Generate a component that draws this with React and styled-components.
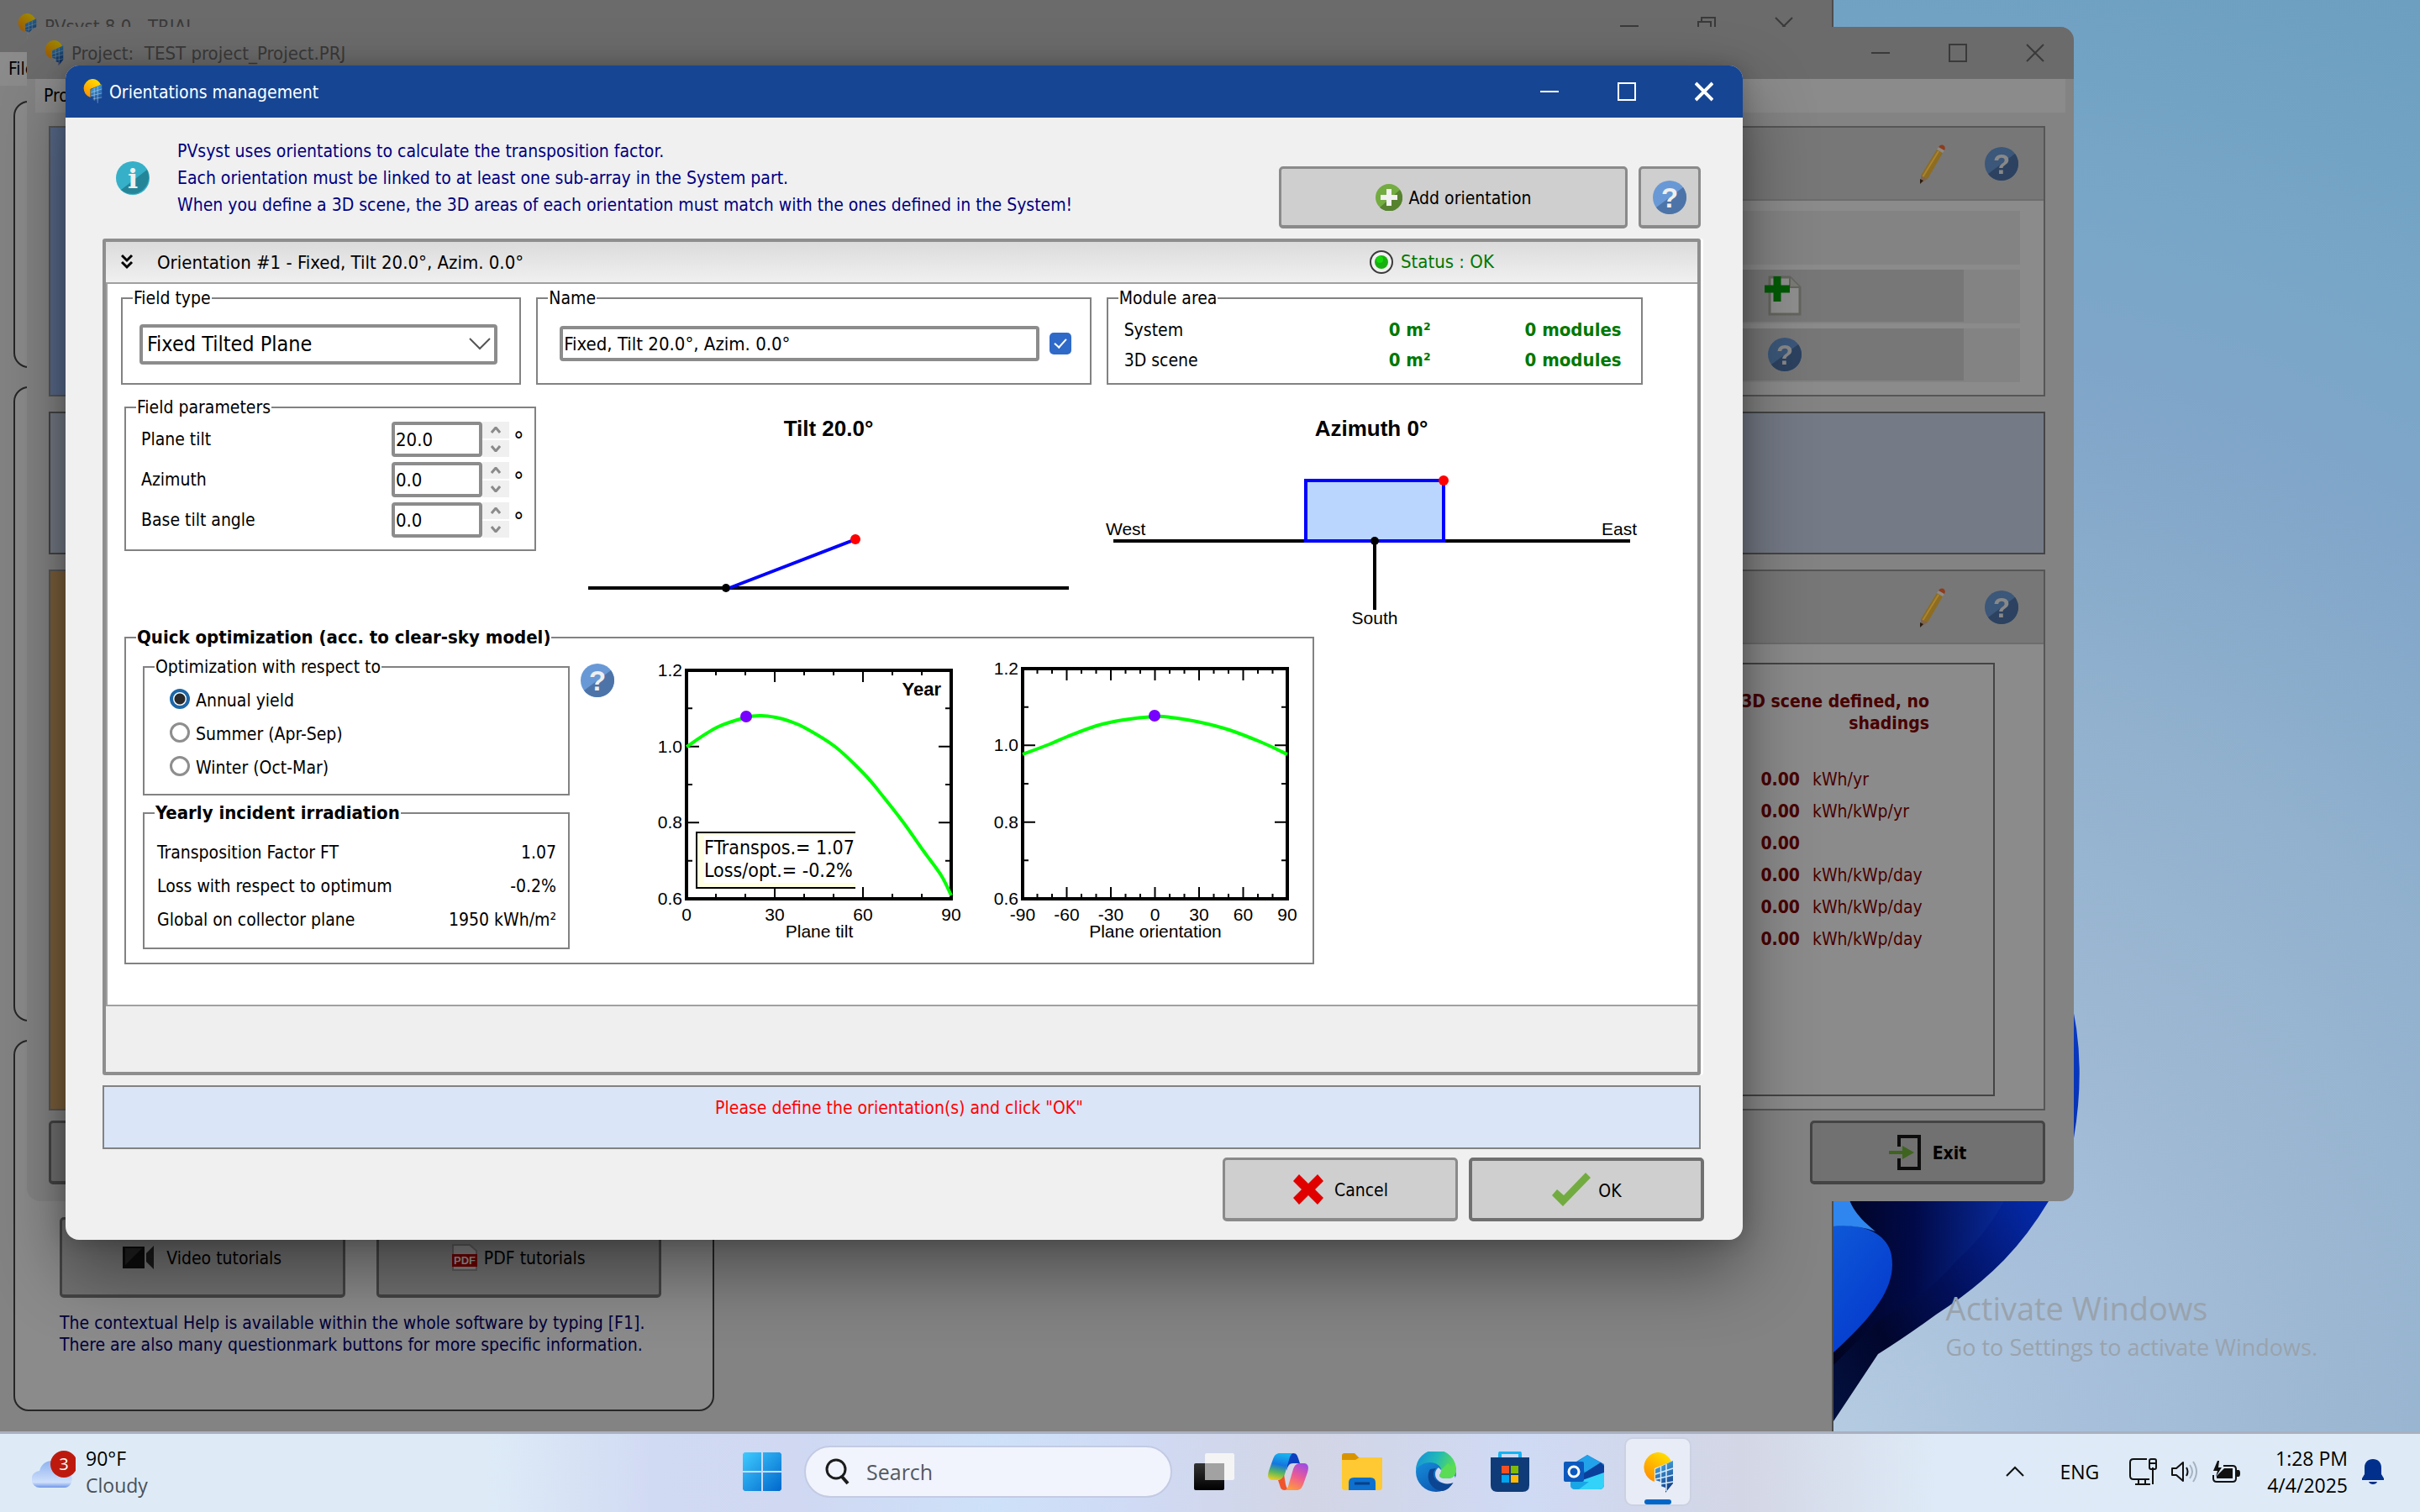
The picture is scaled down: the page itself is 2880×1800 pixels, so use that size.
import React, { useState } from "react";
import styled, { createGlobalStyle, css } from "styled-components";

const TAHOMA = '"DejaVu Sans Condensed", "DejaVu Sans", "Noto Sans", sans-serif';
const SEGOE = '"Open Sans", "Noto Sans", sans-serif';
const ARIAL = '"Liberation Sans", Arial, sans-serif';

const GlobalStyle = createGlobalStyle`
  *, *::before, *::after { box-sizing: border-box; }
  html, body, #root { height: 100%; }
  body { margin: 0; overflow: hidden; font-family: ${TAHOMA}; font-size: 21px; line-height: 26px; color: #000; }
  button, input, select { font: inherit; color: inherit; margin: 0; }
  svg { display: block; flex: none; }
  p, h1, h2 { margin: 0; font-size: inherit; font-weight: inherit; }
`;

/* ---------- desktop ---------- */

const Desktop = styled.div`
  height: 100vh;
  display: flex;
  flex-direction: column;
  background: #9bb8d4;
`;

const Workspace = styled.main`
  position: relative;
  flex: 1;
  overflow: hidden;
  background: radial-gradient(circle at 76% 100%, #b4cbe1 0, #a7bfda 300px, #9cb7d2 600px, #91b1ce 900px, #81a6c9 1250px, #78a6c7 1500px, #6c9fc0 1830px);
`;

const Wallpaper = styled.svg`
  position: absolute;
  right: 398px;
  bottom: 0;
`;

const Watermark = styled.div`
  position: absolute;
  right: 122px;
  bottom: 80px;
  font-family: ${SEGOE};
  font-size: 27px;
  line-height: 40px;
  color: #99a3ad;
`;

const WatermarkTitle = styled.div`
  font-size: 38px;
  line-height: 54px;
`;

/* ---------- window frames ---------- */

const WindowBox = styled.section`
  position: absolute;
  display: flex;
  flex-direction: column;
  overflow: hidden;
`;

const MainWindow = styled(WindowBox)`
  inset: 0 698px 0 0;
  background: #838383;
  border-right: 2px solid #4c4c4c;
`;

const ProjectWindow = styled(WindowBox)`
  top: 32px;
  left: 32px;
  right: 412px;
  border-radius: 16px;
  background: #838383;
`;

const Dialog = styled(WindowBox)`
  top: 78px;
  left: 78px;
  right: 806px;
  border-radius: 16px;
  background: #f0f0f0;
  box-shadow: 0 36px 84px rgba(0, 0, 0, 0.42), 0 0 24px rgba(0, 0, 0, 0.2);
`;

const TitleBar = styled.header`
  display: flex;
  align-items: center;
  height: 62px;
  padding: 0 ${(p) => (p.$maximized ? 46 : 35)}px 0 20px;
  gap: ${(p) => (p.$active ? 8 : 9)}px;
  background: ${(p) => (p.$active ? "#164593" : "#6b6b6b")};
  color: ${(p) => (p.$active ? "#fff" : "#3a3a3a")};
  font-size: ${(p) => (p.$active ? 21 : 22)}px;
`;

const TitleText = styled.h1`
  flex: 1;
  padding-top: 2px;
  white-space: pre;
`;

const FrameButtons = styled.div`
  display: flex;
  gap: 70px;
`;

const FrameButton = styled.button`
  width: 22px;
  height: 24px;
  padding: 0;
  border: 0;
  background: none;
`;

const MenuBar = styled.nav`
  height: 40px;
  margin: 0 10px 0 ${(p) => (p.$flush ? 0 : 10)}px;
  padding: 7px 10px;
  background: #8b8b8b;
`;

const MenuLink = styled.a`
  color: #000;
  text-decoration: none;
`;

/* ---------- main window ---------- */

const CardColumn = styled.div`
  flex: 1;
  display: grid;
  grid-template-rows: 318fr 755fr 442fr;
  gap: 22px;
  width: 852px;
  padding: 18px 2px 24px 16px;
`;

const Card = styled.div`
  display: flex;
  flex-direction: column;
  justify-content: flex-end;
  gap: 17px;
  padding: 0 55px 64px 53px;
  border: 2px solid #262626;
  border-radius: 18px;
  background: #8b8b8b;
`;

const TutorialRow = styled.div`
  display: grid;
  grid-template-columns: 1fr 1fr;
  gap: 37px;
  margin-right: 6px;
`;

const HelpText = styled.p`
  color: #00003c;
  white-space: nowrap;
`;

/* ---------- push buttons ---------- */

const PushButton = styled.button`
  display: flex;
  align-items: center;
  justify-content: center;
  gap: ${(p) => p.$gap || 8}px;
  width: ${(p) => (p.$width ? p.$width + "px" : "auto")};
  height: ${(p) => p.$height || 76}px;
  padding: 0;
  border: ${(p) => (p.$default ? 4 : 3)}px solid ${(p) => (p.$default ? "#707070" : "#8a8a8a")};
  border-bottom-width: 4px;
  border-radius: 5px;
  background: #cfcfcf;
  ${(p) =>
    p.$dim &&
    css`
      background: #717171;
      border-color: #444;
    `}
`;

const Caption = styled.span`
  padding-top: 3px;
`;

/* ---------- project window ---------- */

const ProjectBody = styled.div`
  display: flex;
  flex-direction: column;
  padding: 16px 34px 20px 26px;
`;

const Section = styled.div`
  height: ${(p) => p.$height}px;
  margin-bottom: ${(p) => p.$below}px;
  border: 2px solid ${(p) => p.$line || "#565656"};
  background: linear-gradient(90deg, ${(p) => p.$tint} 400px, ${(p) => p.$fill || "#8b8b8b"} 400px);
`;

const SectionHead = styled.div`
  display: flex;
  align-items: center;
  justify-content: flex-end;
  gap: 46px;
  height: 87px;
  margin-left: 400px;
  padding-right: 30px;
  background: #777;
  border-bottom: 2px solid #6d6d6d;
`;

const Lines = styled.div`
  display: flex;
  flex-direction: column;
  gap: 6px;
  padding: 12px 28px 0 400px;
`;

const Line = styled.div`
  height: 64px;
  padding-right: 67px;
  background: #838383;
`;

const LineField = styled.div`
  display: flex;
  align-items: center;
  justify-content: flex-end;
  height: 62px;
  padding-right: 193px;
  background: #777;
`;

const SummaryBox = styled.div`
  height: 516px;
  margin: 22px 58px 0 400px;
  border: 2px solid #444;
  padding-right: 76px;
  color: #480000;
`;

const SummaryTitle = styled.p`
  padding-top: 31px;
  text-align: right;
  font-weight: bold;
`;

const SummaryTable = styled.table`
  margin: 35px 0 0 auto;
  border-collapse: collapse;
  td {
    height: 38px;
    padding: 0;
    width: 139px;
  }
  th {
    padding: 0 15px 0 0;
    text-align: right;
  }
`;

const ExitRow = styled.div`
  display: flex;
  justify-content: space-between;
  font-weight: bold;
`;

/* ---------- dialog ---------- */

const DialogBody = styled.div`
  padding: 24px 50px 22px 44px;
`;

const InfoRow = styled.div`
  display: flex;
  height: 108px;
  margin-bottom: 12px;
  padding-left: 16px;
`;

const InfoText = styled.p`
  flex: 1;
  height: 96px;
  padding-left: 33px;
  line-height: 32px;
  color: #000080;
`;

const InfoIconBox = styled.div`
  padding-top: 28px;
`;

const InfoActions = styled.div`
  display: flex;
  align-self: flex-end;
  gap: 13px;
`;

const Panel = styled.section`
  border: 4px solid #8e8e8e;
  border-radius: 3px;
  box-shadow: 3px 0 0 #fff;
`;

const PanelHead = styled.div`
  display: flex;
  align-items: center;
  height: 50px;
  padding: 0 0 0 18px;
  border-bottom: 2px solid #a0a0a0;
  background: linear-gradient(#dbdbdb, #f0f0f0);
  font-size: 22px;
`;

const PanelTitle = styled.h2`
  flex: 1;
  padding: 2px 0 0 28px;
`;

const Status = styled.div`
  display: flex;
  align-items: center;
  gap: 9px;
  width: 390px;
  color: #007800;
`;

const PanelBody = styled.div`
  padding: 4px 0 48px;
  border-left: 2px solid #a0a0a0;
  border-bottom: 2px solid #a0a0a0;
  background: #fff;
`;

const PanelFoot = styled.div`
  height: 78px;
  background: #efefef;
`;

const Group = styled.fieldset`
  min-width: 0;
  margin: 0;
  padding: 0;
  border: 2px solid #828282;
`;

const GroupTitle = styled.legend`
  margin-left: 12px;
  padding: 0 1px;
  font-size: ${(p) => (p.$bold ? 22 : 21)}px;
  font-weight: ${(p) => (p.$bold ? "bold" : "normal")};
`;

const TopGroups = styled.div`
  display: grid;
  grid-template-columns: 476fr 660fr 638fr;
  gap: 18px;
  padding: 0 65px 14px 16px;
`;

const SelectBox = styled.div`
  position: relative;
  margin: 18px 26px 22px 20px;
`;

const Select = styled.select`
  width: 100%;
  height: 48px;
  padding: 0 5px;
  border: 4px solid #8c8c8c;
  border-radius: 4px;
  background: #fff;
  appearance: none;
  font-size: 25px;
`;

const SelectArrow = styled.svg`
  position: absolute;
  right: 8px;
  top: 16px;
  pointer-events: none;
`;

const NameRow = styled.div`
  display: flex;
  align-items: center;
  gap: 12px;
  margin: 20px 22px 26px 26px;
`;

const TextInput = styled.input`
  flex: ${(p) => (p.$width ? "none" : 1)};
  width: ${(p) => (p.$width ? p.$width + "px" : "auto")};
  min-width: 0;
  height: 42px;
  padding: 0 1px;
  border: 4px solid #8c8c8c;
  border-radius: 4px;
  background: #fff;
  font-size: 22px;
`;

const Check = styled.input`
  appearance: none;
  width: 26px;
  height: 26px;
  border: 2px solid #777;
  border-radius: 5px;
  background: #fff;
  &:checked {
    border: 0;
    background: #2f6ac9;
  }
  &:checked::after {
    content: "";
    display: block;
    width: 8px;
    height: 14px;
    margin: 4px auto 0;
    border: solid #fff;
    border-width: 0 2px 2px 0;
    transform: rotate(42deg);
  }
`;

const AreaTable = styled.table`
  width: 592px;
  margin: 6px 22px 8px 19px;
  border-collapse: collapse;
  th,
  td {
    height: 36px;
    padding: 2px 0 0;
  }
  th {
    text-align: left;
    font-weight: normal;
  }
  td {
    text-align: right;
    font-size: 22px;
    font-weight: bold;
    color: #007800;
  }
  td + td {
    width: 227px;
  }
`;

const MiddleRow = styled.div`
  display: flex;
  align-items: flex-start;
  padding-left: 20px;
`;

const ParamGroup = styled(Group)`
  width: 490px;
`;

const ParamRows = styled.div`
  padding: 1px 0 11px 18px;
`;

const ParamRow = styled.div`
  display: flex;
  align-items: center;
  height: 48px;
`;

const ParamLabel = styled.label`
  flex: 1;
`;

const Spin = styled.div`
  display: grid;
  gap: 2px;
  width: 32px;
`;

const SpinButton = styled.button`
  display: grid;
  place-items: center;
  height: 20px;
  padding: 0;
  border: 0;
  background: #f0f0f0;
`;

const Degree = styled.span`
  width: 30px;
  padding: 4px 0 0 5px;
  font-size: 28px;
`;

const Sketches = styled.div`
  display: flex;
  gap: 10px;
  margin-bottom: -6px;
  padding-left: 22px;
`;

const QuickGroup = styled(Group)`
  width: 1416px;
  margin-left: 20px;
`;

const QuickBody = styled.div`
  display: flex;
  align-items: flex-start;
  padding: 9px 0 15px 20px;
`;

const QuickColumn = styled.div`
  display: grid;
  gap: 8px;
  width: 508px;
  margin-right: 13px;
`;

const HelpLink = styled.button`
  margin: 9px 29px 0 0;
  padding: 0;
  border: 0;
  background: none;
`;

const RadioRows = styled.div`
  padding: 5px 0 13px 30px;
`;

const RadioRow = styled.label`
  display: flex;
  align-items: center;
  gap: 7px;
  height: 40px;
`;

const Radio = styled.input`
  appearance: none;
  width: 24px;
  height: 24px;
  border: 3px solid #8e8e8e;
  border-radius: 50%;
  background: #fff;
  &:checked {
    border: 4px solid #1d67a8;
    background: radial-gradient(circle, #2a2a2a 6px, #fff 7px);
  }
`;

const YieldTable = styled.table`
  width: 475px;
  margin: 13px 14px 14px 15px;
  border-collapse: collapse;
  th,
  td {
    height: 40px;
    padding: 1px 0 0;
    font-weight: normal;
  }
  th {
    text-align: left;
  }
  td {
    text-align: right;
  }
`;

const Message = styled.div`
  height: 76px;
  margin-top: 12px;
  padding: 12px 6px 0 0;
  border: 2px solid #828282;
  background: #dae5f7;
  text-align: center;
  color: #f00;
`;

const DialogActions = styled.div`
  display: flex;
  justify-content: flex-end;
  gap: 13px;
  margin: 10px -4px 0 0;
`;

/* ---------- taskbar ---------- */

const Taskbar = styled.footer`
  display: grid;
  grid-template-columns: 1fr auto 1fr;
  align-items: center;
  height: 96px;
  padding-bottom: 3px;
  border-top: 3px solid #a9b0bf;
  font-family: ${SEGOE};
  font-size: 23px;
  line-height: 32px;
  background: linear-gradient(90deg, #deebf7 0%, #deebf7 20%, #d1daf3 27%, #d0d8f2 33%, #cde1f8 41%, #d0daf4 47%, #d2d5e5 54%, #cfdaf4 63%, #d3d6e5 72%, #deeaf7 80%, #deebf7 100%);
`;

const Weather = styled.button`
  display: flex;
  align-items: center;
  gap: 12px;
  padding: 0 0 0 38px;
  border: 0;
  background: none;
  text-align: left;
`;

const WeatherState = styled.div`
  color: #4b5056;
`;

const TaskIcons = styled.div`
  display: flex;
  align-items: center;
  gap: 12px;
`;

const TaskButton = styled.button`
  display: flex;
  flex-direction: column;
  align-items: center;
  justify-content: center;
  width: 76px;
  height: 78px;
  padding: 0;
  border: 0;
  background: none;
  ${(p) =>
    p.$active &&
    css`
      justify-content: flex-end;
      gap: 8px;
      border-radius: 8px;
      background: #e8ecf6;
      box-shadow: 0 0 0 2px #ccd1e2;
      &::after {
        content: "";
        width: 32px;
        height: 6px;
        border-radius: 3px;
        background: #0067c8;
      }
    `}
`;

const SearchBox = styled.label`
  display: flex;
  align-items: center;
  gap: 20px;
  width: 438px;
  height: 62px;
  padding: 0 22px;
  border: 2px solid #c3cbe3;
  border-radius: 31px;
  background: #f1f4fd;
`;

const SearchInput = styled.input`
  flex: 1;
  min-width: 0;
  padding: 0;
  border: 0;
  outline: 0;
  background: none;
  font-size: 25px;
  &::placeholder {
    color: #55595f;
    opacity: 1;
  }
`;

const Tray = styled.div`
  display: flex;
  align-items: center;
  justify-content: flex-end;
  gap: 16px;
  padding-right: 42px;
`;

const Language = styled.span`
  padding: 0 20px 0 26px;
`;

const Clock = styled.time`
  padding-left: 16px;
  text-align: right;
`;

/* ---------- icons ---------- */

const Logo = ({ w = 24, h = 30, dim }) => (
  <svg width={w} height={h} viewBox="0 0 38 48" style={{ filter: dim ? "brightness(0.62)" : "none" }}>
    <defs>
      <linearGradient id="sun" x1="0.8" y1="0" x2="0.1" y2="1">
        <stop offset="0" stopColor="#ffe100" />
        <stop offset="1" stopColor="#ff8a00" />
      </linearGradient>
      <linearGradient id="cell" x1="0" y1="0" x2="0.3" y2="1">
        <stop offset="0" stopColor="#4db2ea" />
        <stop offset="1" stopColor="#14408c" />
      </linearGradient>
    </defs>
    <path d="M18 0a17 17 0 0 1 17 11L15 19v16A18 18 0 0 1 18 0Z" fill="url(#sun)" />
    <path d="M16 20 37 10v27l-9 11v-6l-6-2v-5l-6-2Z" fill="url(#cell)" />
    <path d="M22.500 17v24M29 14v32M16 26l21-7M16 32l21-5M20 38l17-3" stroke="#d8ecfa" strokeWidth={w > 30 ? 1.5 : 0.7} fill="none" />
  </svg>
);

const WinMin = () => (
  <svg width="22" height="24"><path d="M0 12h22" stroke="currentColor" strokeWidth="2" /></svg>
);
const WinMax = () => (
  <svg width="22" height="24"><rect x="1" y="2" width="20" height="20" fill="none" stroke="currentColor" strokeWidth="2" /></svg>
);
const WinRestore = () => (
  <svg width="22" height="24"><path d="M1 7h15v15H1zM5 7V2h16v15h-5" fill="none" stroke="currentColor" strokeWidth="2" /></svg>
);
const WinClose = ({ bold }) => (
  <svg width="22" height="24"><path d="M1 2l20 20M21 2L1 22" stroke="currentColor" strokeWidth={bold ? 4 : 2} /></svg>
);

const HelpIcon = ({ dim }) => (
  <svg width="40" height="40" viewBox="0 0 40 40" style={{ filter: dim ? "brightness(0.57)" : "none" }}>
    <circle cx="20" cy="20" r="20" fill="#6899d6" />
    <path d="M36 8A20 20 0 0 1 4 32Z" fill="#4d74a8" />
    <text x="20" y="32" textAnchor="middle" fontFamily="Liberation Sans" fontWeight="bold" fontSize="33" fill="#efefef">?</text>
  </svg>
);

const InfoIcon = () => (
  <svg width="40" height="40" viewBox="0 0 40 40">
    <circle cx="20" cy="20" r="20" fill="#35b0c8" />
    <path d="M37 10A20 20 0 0 1 6 34Z" fill="#258598" />
    <text x="20" y="32" textAnchor="middle" fontFamily="DejaVu Serif" fontWeight="bold" fontSize="32" fill="#f0f0f0">i</text>
  </svg>
);

const AddIcon = () => (
  <svg width="32" height="32" viewBox="0 0 32 32">
    <circle cx="16" cy="16" r="16" fill="#73ac41" />
    <path d="M29 7A16 16 0 0 1 5 28Z" fill="#578230" />
    <path d="M16 6v20M6 16h20" stroke="#f2f2f2" strokeWidth="6" />
  </svg>
);

const Pencil = () => (
  <svg width="32" height="48" viewBox="0 0 32 48">
    <path d="M2 38 21 7l7 4L10 42Z" fill="#8e6c20" />
    <path d="M4 40 23 9" stroke="#a98530" strokeWidth="2" />
    <path d="m21 7 2-3 7 4-2 3Z" fill="#8f8a86" />
    <path d="M23 4c3-5 10-2 7 4Z" fill="#8e3c1c" />
    <path d="m2 38 8 4-8 5Z" fill="#80654a" />
    <path d="m1 42 4 2-4 4Z" fill="#2a1c12" />
  </svg>
);

const NewDoc = () => (
  <svg width="44" height="50" viewBox="0 0 44 50">
    <path d="M6 3h24l12 12v32H6Z" fill="#8f8f8f" stroke="#65655f" strokeWidth="3" />
    <path d="M30 3v12h12" fill="#7a7a76" stroke="#65655f" strokeWidth="2" />
    <path d="M15 2v30M0 17h30" stroke="#005a05" strokeWidth="9" />
  </svg>
);

const ExitIcon = () => (
  <svg width="38" height="42" viewBox="0 0 38 42">
    <path d="M12 14V2h24v38H12V28" fill="none" stroke="#0c0c0c" strokeWidth="4" />
    <path d="M0 21h20" stroke="#3f6420" strokeWidth="4" />
    <path d="M16 13v16l14-8Z" fill="#3f6420" />
  </svg>
);

const VideoIcon = () => (
  <svg width="38" height="28" viewBox="0 0 38 28">
    <rect y="1" width="26" height="26" fill="#0c0c0c" />
    <path d="M3 3h20L3 23Z" fill="#202020" />
    <path d="M28 9 37 0v28l-9-9Z" fill="#1a1a1a" />
  </svg>
);

const PdfIcon = () => (
  <svg width="30" height="32" viewBox="0 0 30 32">
    <path d="M1 1h20l8 7v23H1Z" fill="#858585" stroke="#5c5c5c" strokeWidth="2" />
    <rect y="12" width="30" height="15" fill="#6e0000" />
    <text x="15" y="24" textAnchor="middle" fontFamily="Liberation Sans" fontWeight="bold" fontSize="13" fill="#999">PDF</text>
  </svg>
);

const CrossIcon = () => (
  <svg width="38" height="38" viewBox="0 0 38 38">
    <path d="m8 1 11 11L30 1l7 8-10 10 10 10-7 8-11-11L8 37l-7-8 10-10L1 9Z" fill="#e00000" />
  </svg>
);

const TickIcon = () => (
  <svg width="48" height="40" viewBox="0 0 48 40">
    <path d="M1 27 7 20l8 7L41 0l6 6-33 34Z" fill="#72ac40" />
  </svg>
);

const ExpandIcon = () => (
  <svg width="15" height="20" viewBox="0 0 15 20">
    <path d="M1 2l6 6 6-6M1 10l6 6 6-6" fill="none" stroke="#000" strokeWidth="3" />
  </svg>
);

const StatusIcon = () => (
  <svg width="28" height="28" viewBox="0 0 28 28">
    <circle cx="14" cy="14" r="13" fill="#f2f2f2" stroke="#3b3b3b" strokeWidth="2" />
    <circle cx="14" cy="14" r="8" fill="#18b010" />
    <circle cx="12" cy="11" r="4" fill="#14d80a" />
  </svg>
);

const SpinArrow = ({ down }) => (
  <svg width="12" height="8" viewBox="0 0 12 8">
    <path d={down ? "M1 1l5 6 5-6" : "M1 7l5-6 5 6"} fill="none" stroke="#8b8b8b" strokeWidth="3" />
  </svg>
);

/* ---------- orientation drawings ---------- */

const TiltSketch = () => (
  <svg width="640" height="280" viewBox="0 0 640 280" fontFamily={ARIAL}>
    <text x="326" y="47" textAnchor="middle" fontWeight="bold" fontSize="26">Tilt 20.0°</text>
    <path d="M40 228h572" stroke="#000" strokeWidth="4" />
    <path d="M208 228 358 170" stroke="#00f" strokeWidth="4" />
    <circle cx="204" cy="228" r="5" />
    <circle cx="358" cy="170" r="6" fill="#f00" />
  </svg>
);

const AzimuthSketch = () => (
  <svg width="660" height="280" viewBox="0 0 660 280" fontFamily={ARIAL} fontSize="21">
    <text x="322" y="47" textAnchor="middle" fontWeight="bold" fontSize="26">Azimuth 0°</text>
    <path d="M15 172h615M326 172v82" stroke="#000" strokeWidth="4" />
    <rect x="244" y="100" width="164" height="72" fill="#bad6ff" stroke="#00f" strokeWidth="4" />
    <circle cx="326" cy="172" r="5" />
    <circle cx="408" cy="100" r="6" fill="#f00" />
    <text x="6" y="165">West</text>
    <text x="596" y="165">East</text>
    <text x="326" y="271" textAnchor="middle">South</text>
  </svg>
);

/* Catmull-Rom curve through the plotted points */
const smooth = (pts) =>
  pts.slice(0, -1).reduce((d, p, i) => {
    const a = pts[i - 1] || p;
    const b = pts[i + 1];
    const c = pts[i + 2] || b;
    return `${d} C${p[0] + (b[0] - a[0]) / 6} ${p[1] + (b[1] - a[1]) / 6} ${b[0] - (c[0] - p[0]) / 6} ${b[1] - (c[1] - p[1]) / 6} ${b[0]} ${b[1]}`;
  }, `M${pts[0][0]} ${pts[0][1]}`);

const Chart = ({ min, top, title, points, dot, children }) => {
  const left = 57;
  const right = 372;
  const bottom = 289;
  const px = (v) => left + ((v - min) / (90 - min)) * (right - left);
  const py = (v) => bottom - ((v - 0.6) / 0.6) * (bottom - top);
  const xs = [];
  for (let v = min; v <= 90; v += 10) xs.push(v);
  const inner = xs.slice(1, -1);
  return (
    <svg width="400" height="350" viewBox="0 0 400 350" fontFamily={ARIAL} fontSize="21">
      {inner.map((v) => {
        const len = v % 30 === 0 ? 14 : 6;
        return <path key={v} d={`M${px(v)} ${top}v${len}M${px(v)} ${bottom}v${-len}`} stroke="#000" strokeWidth="2" />;
      })}
      {[0.7, 0.8, 0.9, 1, 1.1].map((v, i) => {
        const len = i % 2 ? 15 : 7;
        return <path key={v} d={`M${left} ${py(v)}h${len}M${right} ${py(v)}h${-len}`} stroke="#000" strokeWidth="2" />;
      })}
      <rect x={left} y={top} width={right - left} height={bottom - top} fill="none" stroke="#000" strokeWidth="4" />
      {["1.2", "1.0", "0.8", "0.6"].map((t) => (
        <text key={t} x={left - 5} y={py(Number(t)) + 7} textAnchor="end">{t}</text>
      ))}
      {xs.filter((v) => v % 30 === 0).map((v) => (
        <text key={v} x={px(v)} y="315" textAnchor="middle">{v}</text>
      ))}
      <text x="215" y="335" textAnchor="middle">{title}</text>
      {children}
      <path d={smooth(points)} fill="none" stroke="#0f0" strokeWidth="4" />
      <circle cx={dot[0]} cy={dot[1]} r="7" fill="#70f" />
    </svg>
  );
};

const TILT_CURVE = [[57, 108], [93, 85], [128, 73], [146, 71], [163, 73], [178, 77], [199, 86], [234, 108], [269, 141], [290, 166], [315, 198], [339, 232], [360, 261], [372, 285]];
const AZIMUTH_CURVE = [[57, 117], [89, 105], [110, 96], [145, 83], [177, 76], [214, 72], [233, 73], [269, 79], [303, 88], [342, 103], [372, 117]];

/* ---------- taskbar icons ---------- */

const StartIcon = () => (
  <svg width="46" height="46" viewBox="0 0 46 46">
    <defs>
      <linearGradient id="win" x1="0" y1="0" x2="1" y2="1">
        <stop offset="0" stopColor="#3fcbff" />
        <stop offset="1" stopColor="#0067cc" />
      </linearGradient>
    </defs>
    <path d="M2 0h20v22H0V2zM24 0h20l2 2v20H24zM0 24h22v22H2l-2-2zM24 24h22v20l-2 2H24z" fill="url(#win)" />
  </svg>
);

const TaskViewIcon = () => (
  <svg width="48" height="46" viewBox="0 0 48 46">
    <defs>
      <linearGradient id="tv" x1="0" y1="0" x2="0" y2="1"><stop stopColor="#333" /><stop offset="1" stopColor="#000" /></linearGradient>
    </defs>
    <rect y="13" width="36" height="32" rx="2" fill="url(#tv)" />
    <rect x="13" y="1" width="35" height="32" rx="2" fill="#f4f4f4" />
    <rect x="13" y="13" width="23" height="20" fill="#a2a2a2" />
  </svg>
);

const CopilotIcon = () => (
  <svg width="48" height="44" viewBox="0 0 48 44">
    <defs>
      <linearGradient id="cpa" x1="0.4" y1="0" x2="0.2" y2="1">
        <stop stopColor="#18b0ee" /><stop offset="0.4" stopColor="#1476e0" /><stop offset="0.7" stopColor="#5bb75c" /><stop offset="1" stopColor="#f2cf20" />
      </linearGradient>
      <linearGradient id="cpb" x1="0.7" y1="0" x2="0.3" y2="1">
        <stop stopColor="#a24be0" /><stop offset="0.5" stopColor="#ee5c92" /><stop offset="1" stopColor="#ff9a3c" />
      </linearGradient>
    </defs>
    <path d="M24 0h6c4 0 5 3 6 6l2 6h-8c-5 0-6 3-8 9Z" fill="#0a3fc0" />
    <path d="M14 0h16c-3 1-4 4-5 8l-5 17c-2 5-4 7-9 7H6c-6 0-7-4-5-11L6 7c2-5 4-7 8-7Z" fill="url(#cpa)" />
    <path d="M11 32c5 0 7-3 8-7l2 12c1 4 2 6 5 7h-6c-4 0-5-2-6-6l-2-6Z" fill="#f0542c" />
    <path d="M34 44H20c3-1 4-4 5-8l5-17c2-5 4-7 8-7h4c6 0 7 4 5 11l-5 14c-2 5-4 7-8 7Z" fill="url(#cpb)" />
  </svg>
);

const FolderIcon = () => (
  <svg width="48" height="44" viewBox="0 0 48 44">
    <path d="M0 3c0-2 1-3 3-3h12l5 5h26l2 2v10H0Z" fill="#d89400" />
    <path d="M0 8h16l5-3h27v37l-2 2H2l-2-2Z" fill="#ffc933" />
    <path d="M8 44V35q0-6 6-6h20q6 0 6 6v9Z" fill="#0d6fce" />
    <path d="M15 36h18" stroke="#063f86" strokeWidth="3" />
  </svg>
);

const EdgeIcon = () => (
  <svg width="48" height="48" viewBox="0 0 48 48">
    <defs>
      <linearGradient id="edg" x1="0" y1="0.2" x2="1" y2="0.5"><stop stopColor="#1690d8" /><stop offset="0.5" stopColor="#21b8b8" /><stop offset="1" stopColor="#5ee04a" /></linearGradient>
      <linearGradient id="edb" x1="0" y1="0" x2="0.6" y2="1"><stop stopColor="#1a9be4" /><stop offset="1" stopColor="#0b56b0" /></linearGradient>
    </defs>
    <circle cx="24" cy="24" r="24" fill="url(#edb)" />
    <path d="M0 22A24 24 0 0 1 48 22c0 7-5 10-11 10-5 0-9-1-9-4 2-2 2-4 2-6 0-5-6-9-13-9C9 13 3 17 0 22Z" fill="url(#edg)" />
    <path d="M17 21c-6 10 0 25 15 26 5-1 10-5 13-11-10 5-24 1-24-9 0-3 1-5 3-7Z" fill="#0c4592" />
    <path d="M30 22c0 2 0 4-2 6 0 3 4 4 9 4 4 0 7-1 9-4l2 8-3 1c-10 4-22-1-22-10 0-3 1-6 4-8Z" fill="#d2daf2" />
    <path d="M48 22c0 7-5 10-11 10-5 0-9-1-9-4 2-2 2-4 2-6l8-8Z" fill="#5bdc55" />
  </svg>
);

const StoreIcon = () => (
  <svg width="46" height="48" viewBox="0 0 46 48">
    <path d="M11 10V3q0-2 2-2h20q2 0 2 2v7" fill="none" stroke="#16b2f2" strokeWidth="4" />
    <path d="M0 7h46v33q0 8-8 8H8q-8 0-8-8Z" fill="#0f3c78" />
    <path d="M13 17h9v9h-9z" fill="#f25022" /><path d="M24 17h9v9h-9z" fill="#7fba00" />
    <path d="M13 28h9v9h-9z" fill="#00a4ef" /><path d="M24 28h9v9h-9z" fill="#ffb900" />
  </svg>
);

const OutlookIcon = () => (
  <svg width="48" height="42" viewBox="0 0 48 42">
    <path d="M10 12 28 1 48 12v24q0 6-6 6H14q-6 0-6-6Z" fill="#1683dc" />
    <path d="m16 10 12-9 20 12-18 14Z" fill="#22a2ea" />
    <path d="m22 24 22-14 4 4v8L26 38Z" fill="#0b3f9c" />
    <path d="M48 22v14q0 6-6 6H14q-6 0-6-6Z" fill="#33d2f8" />
    <path d="M8 33h22L18 42h-4q-6 0-6-6Z" fill="#19a6e6" />
    <rect y="9" width="24" height="24" rx="2" fill="#0c59bd" />
    <circle cx="12" cy="21" r="6" fill="none" stroke="#fff" strokeWidth="3" />
  </svg>
);

const WeatherIcon = () => (
  <svg width="52" height="50" viewBox="0 0 52 50">
    <defs>
      <linearGradient id="cl" x1="0" y1="0" x2="0" y2="1"><stop stopColor="#8fb2f0" /><stop offset="0.8" stopColor="#cfe0fa" /><stop offset="1" stopColor="#6f96e8" /></linearGradient>
    </defs>
    <path d="M10 44a10 10 0 0 1-1-20c2-8 8-12 15-12 9 0 14 6 15 12 12 1 11 20 0 20Z" fill="url(#cl)" />
    <circle cx="38" cy="16" r="16" fill="#bd1a0d" />
    <text x="38" y="23" textAnchor="middle" fontFamily="Open Sans" fontSize="20" fill="#fff">3</text>
  </svg>
);

const SearchIcon = () => (
  <svg width="30" height="32" viewBox="0 0 30 32">
    <circle cx="14" cy="13" r="11" fill="none" stroke="#1c1c1c" strokeWidth="3" />
    <path d="m21 22 7 8" stroke="#1c1c1c" strokeWidth="4" />
  </svg>
);

const UpIcon = () => (
  <svg width="22" height="14" viewBox="0 0 22 14"><path d="M1 12 11 2l10 10" fill="none" stroke="#111" strokeWidth="2" /></svg>
);

const NetworkIcon = () => (
  <svg width="34" height="34" viewBox="0 0 34 34" fill="none" stroke="#111" strokeWidth="2">
    <path d="M21 2H5q-4 0-4 4v16q0 4 4 4h19M11 26v6M19 26v6M7 32h18M28 12v20" />
    <rect x="24" y="2" width="8" height="12" rx="2" /><path d="M24 7h8" />
  </svg>
);

const SoundIcon = () => (
  <svg width="32" height="28" viewBox="0 0 32 28" fill="none" strokeWidth="2">
    <path d="M1 10h5l8-7v22l-8-7H1Z" stroke="#111" strokeLinejoin="round" />
    <path d="M18 9q3 5 0 10" stroke="#111" />
    <path d="M22 6q6 8 0 16M26 2q8 12 0 24" stroke="#a6b2c0" />
  </svg>
);

const BatteryIcon = () => (
  <svg width="34" height="28" viewBox="0 0 34 28">
    <path d="M14 7h11q4 0 4 4v11q0 4-4 4H6q-4 0-4-4v-4" fill="none" stroke="#111" strokeWidth="2" />
    <path d="M15 10h10v12H6v-3Z" fill="#111" />
    <path d="M30 12h2q2 0 2 4t-2 4h-2ZM7 1 2 13h5L5 20l7-11H8l1-8Z" fill="#111" />
  </svg>
);

const BellIcon = () => (
  <svg width="28" height="32" viewBox="0 0 28 32">
    <path d="M14 1c6 0 10 4 10 10v8l3 5v2H1v-2l3-5v-8C4 5 8 1 14 1ZM9 28h10c-1 4-9 4-10 0Z" fill="#00308c" />
  </svg>
);

/* ---------- composed parts ---------- */

const Frame = ({ active, title, maximized }) => (
  <TitleBar $active={active} $maximized={maximized}>
    <Logo dim={!active} />
    <TitleText>{title}</TitleText>
    <FrameButtons>
      <FrameButton aria-label="Minimize"><WinMin /></FrameButton>
      <FrameButton aria-label="Maximize">{maximized ? <WinRestore /> : <WinMax />}</FrameButton>
      <FrameButton aria-label="Close"><WinClose bold={active} /></FrameButton>
    </FrameButtons>
  </TitleBar>
);

const BloomWallpaper = () => (
  <Wallpaper width="300" height="524" viewBox="0 0 300 524">
    <defs>
      <linearGradient id="b1" x1="1" y1="0" x2="0" y2="1"><stop stopColor="#0a3cc4" /><stop offset="0.35" stopColor="#0428a4" /><stop offset="0.6" stopColor="#02105c" /><stop offset="0.8" stopColor="#01062c" /><stop offset="1" stopColor="#03113f" /></linearGradient>
      <linearGradient id="b2" x1="0" y1="0.2" x2="1" y2="0.2"><stop stopColor="#010420" /><stop offset="0.4" stopColor="#010a48" /><stop offset="1" stopColor="#0a34b4" /></linearGradient>
      <linearGradient id="b3" x1="0" y1="0" x2="0.6" y2="1"><stop stopColor="#0e58d8" /><stop offset="1" stopColor="#0439cc" /></linearGradient>
    </defs>
    <path d="M0 0H280Q302 80 286 175C280 205 272 225 256 250Q232 290 203 320Q170 354 122 385Q85 412 53 432L0 512Z" fill="url(#b1)" />
    <path d="M0 0h240l-37 250q-22 40-56 70-20 24-42 40l-53 33-52 52Z" fill="url(#b2)" />
    <path d="M0 280c26-4 60 4 68 30 10 40-20 76-68 120Z" fill="url(#b3)" />
    <path d="M0 230h14c4 26 16 40 36 56-16-6-34-8-50-6Z" fill="#2f86ee" />
  </Wallpaper>
);

const SpinField = ({ id, label, initial }) => {
  const [value, setValue] = useState(initial);
  const step = (d) => setValue((Number(value) + d).toFixed(1));
  return (
    <ParamRow>
      <ParamLabel htmlFor={id}>{label}</ParamLabel>
      <TextInput id={id} $width={108} value={value} onChange={(e) => setValue(e.target.value)} />
      <Spin>
        <SpinButton aria-label="Increase" onClick={() => step(1)}><SpinArrow /></SpinButton>
        <SpinButton aria-label="Decrease" onClick={() => step(-1)}><SpinArrow down /></SpinButton>
      </Spin>
      <Degree>°</Degree>
    </ParamRow>
  );
};

const MainApp = () => (
  <MainWindow>
    <Frame title="PVsyst 8.0 - TRIAL" maximized />
    <MenuBar $flush><MenuLink href="#file">File</MenuLink></MenuBar>
    <CardColumn>
      <Card />
      <Card />
      <Card>
        <TutorialRow>
          <PushButton $dim $height={96} $gap={14}><VideoIcon /><Caption>Video tutorials</Caption></PushButton>
          <PushButton $dim $height={96}><PdfIcon /><Caption>PDF tutorials</Caption></PushButton>
        </TutorialRow>
        <HelpText>
          The contextual Help is available within the whole software by typing [F1].<br />
          There are also many questionmark buttons for more specific information.
        </HelpText>
      </Card>
    </CardColumn>
  </MainWindow>
);

const RESULTS = ["kWh/yr", "kWh/kWp/yr", "", "kWh/kWp/day", "kWh/kWp/day", "kWh/kWp/day"];

const Project = () => (
  <ProjectWindow>
    <Frame title="Project:  TEST project_Project.PRJ" />
    <MenuBar><MenuLink href="#project">Project</MenuLink></MenuBar>
    <ProjectBody>
      <Section $height={322} $below={18} $tint="#596a8b">
        <SectionHead><Pencil /><HelpIcon dim /></SectionHead>
        <Lines>
          <Line />
          <Line><LineField><NewDoc /></LineField></Line>
          <Line><LineField><HelpIcon dim /></LineField></Line>
        </Lines>
      </Section>
      <Section $height={170} $below={18} $line="#454545" $tint="#747a86" $fill="#747a86" />
      <Section $height={644} $below={12} $tint="#7c603c">
        <SectionHead><Pencil /><HelpIcon dim /></SectionHead>
        <SummaryBox>
          <SummaryTitle>3D scene defined, no<br />shadings</SummaryTitle>
          <SummaryTable>
            <tbody>
              {RESULTS.map((unit, i) => (
                <tr key={i}><th>0.00</th><td>{unit}</td></tr>
              ))}
            </tbody>
          </SummaryTable>
        </SummaryBox>
      </Section>
      <ExitRow>
        <PushButton $dim $width={280} aria-label="Overview" />
        <PushButton $dim $width={280} $gap={14}><ExitIcon /><Caption>Exit</Caption></PushButton>
      </ExitRow>
    </ProjectBody>
  </ProjectWindow>
);

const PERIODS = ["Annual yield", "Summer (Apr-Sep)", "Winter (Oct-Mar)"];

const Orientations = () => (
  <Dialog role="dialog" aria-label="Orientations management">
    <Frame active title="Orientations management" />
    <DialogBody>
      <InfoRow>
        <InfoIconBox><InfoIcon /></InfoIconBox>
        <InfoText>
          PVsyst uses orientations to calculate the transposition factor.<br />
          Each orientation must be linked to at least one sub-array in the System part.<br />
          When you define a 3D scene, the 3D areas of each orientation must match with the ones defined in the System!
        </InfoText>
        <InfoActions>
          <PushButton $width={415} $height={74}><AddIcon /><Caption>Add orientation</Caption></PushButton>
          <PushButton $width={74} $height={74} aria-label="Help"><HelpIcon /></PushButton>
        </InfoActions>
      </InfoRow>

      <Panel>
        <PanelHead>
          <ExpandIcon />
          <PanelTitle>Orientation #1 - Fixed, Tilt 20.0°, Azim. 0.0°</PanelTitle>
          <Status><StatusIcon />Status : OK</Status>
        </PanelHead>
        <PanelBody>
          <TopGroups>
            <Group>
              <GroupTitle>Field type</GroupTitle>
              <SelectBox>
                <Select aria-label="Field type"><option>Fixed Tilted Plane</option></Select>
                <SelectArrow width="26" height="15" viewBox="0 0 26 15">
                  <path d="M1 1l12 12L25 1" fill="none" stroke="#555" strokeWidth="2" />
                </SelectArrow>
              </SelectBox>
            </Group>
            <Group>
              <GroupTitle>Name</GroupTitle>
              <NameRow>
                <TextInput aria-label="Name" defaultValue="Fixed, Tilt 20.0°, Azim. 0.0°" />
                <Check type="checkbox" aria-label="Automatic name" defaultChecked />
              </NameRow>
            </Group>
            <Group>
              <GroupTitle>Module area</GroupTitle>
              <AreaTable>
                <tbody>
                  <tr><th>System</th><td>0 m²</td><td>0 modules</td></tr>
                  <tr><th>3D scene</th><td>0 m²</td><td>0 modules</td></tr>
                </tbody>
              </AreaTable>
            </Group>
          </TopGroups>

          <MiddleRow>
            <ParamGroup>
              <GroupTitle>Field parameters</GroupTitle>
              <ParamRows>
                <SpinField id="tilt" label="Plane tilt" initial="20.0" />
                <SpinField id="azimuth" label="Azimuth" initial="0.0" />
                <SpinField id="base" label="Base tilt angle" initial="0.0" />
              </ParamRows>
            </ParamGroup>
            <Sketches>
              <TiltSketch />
              <AzimuthSketch />
            </Sketches>
          </MiddleRow>

          <QuickGroup>
            <GroupTitle $bold>Quick optimization (acc. to clear-sky model)</GroupTitle>
            <QuickBody>
              <QuickColumn>
                <Group>
                  <GroupTitle>Optimization with respect to</GroupTitle>
                  <RadioRows>
                    {PERIODS.map((p, i) => (
                      <RadioRow key={p}><Radio type="radio" name="period" defaultChecked={i === 0} /><Caption>{p}</Caption></RadioRow>
                    ))}
                  </RadioRows>
                </Group>
                <Group>
                  <GroupTitle $bold>Yearly incident irradiation</GroupTitle>
                  <YieldTable>
                    <tbody>
                      <tr><th>Transposition Factor FT</th><td>1.07</td></tr>
                      <tr><th>Loss with respect to optimum</th><td>-0.2%</td></tr>
                      <tr><th>Global on collector plane</th><td>1950 kWh/m²</td></tr>
                    </tbody>
                  </YieldTable>
                </Group>
              </QuickColumn>
              <HelpLink aria-label="Help"><HelpIcon /></HelpLink>
              <Chart min={0} top={17} title="Plane tilt" points={TILT_CURVE} dot={[128, 72]}>
                <text x="360" y="47" textAnchor="end" fontWeight="bold" fontSize="22">Year</text>
                <rect x="68" y="209" width="190" height="68" fill="#ffffe1" />
                <rect x="78" y="214" width="182" height="56" fill="#fff" />
                <path d="M258 210H69v66h189" fill="none" stroke="#000" strokeWidth="2" />
                <g fontFamily={TAHOMA} fontSize="23">
                  <text x="78" y="236">FTranspos.= 1.07</text>
                  <text x="78" y="263">Loss/opt.= -0.2%</text>
                </g>
              </Chart>
              <Chart min={-90} top={15} title="Plane orientation" points={AZIMUTH_CURVE} dot={[214, 71]} />
            </QuickBody>
          </QuickGroup>
        </PanelBody>
        <PanelFoot />
      </Panel>

      <Message>Please define the orientation(s) and click "OK"</Message>
      <DialogActions>
        <PushButton $width={280} $gap={12}><CrossIcon /><Caption>Cancel</Caption></PushButton>
        <PushButton $width={280} $default><TickIcon /><Caption>OK</Caption></PushButton>
      </DialogActions>
    </DialogBody>
  </Dialog>
);

export default function App() {
  return (
    <Desktop>
      <GlobalStyle />
      <Workspace>
        <BloomWallpaper />
        <Watermark>
          <WatermarkTitle>Activate Windows</WatermarkTitle>
          Go to Settings to activate Windows.
        </Watermark>
        <MainApp />
        <Project />
        <Orientations />
      </Workspace>
      <Taskbar>
        <Weather>
          <WeatherIcon />
          <div>90°F<WeatherState>Cloudy</WeatherState></div>
        </Weather>
        <TaskIcons>
          <TaskButton aria-label="Start"><StartIcon /></TaskButton>
          <SearchBox><SearchIcon /><SearchInput placeholder="Search" aria-label="Search" /></SearchBox>
          <TaskButton aria-label="Task view"><TaskViewIcon /></TaskButton>
          <TaskButton aria-label="Copilot"><CopilotIcon /></TaskButton>
          <TaskButton aria-label="File Explorer"><FolderIcon /></TaskButton>
          <TaskButton aria-label="Edge"><EdgeIcon /></TaskButton>
          <TaskButton aria-label="Store"><StoreIcon /></TaskButton>
          <TaskButton aria-label="Outlook"><OutlookIcon /></TaskButton>
          <TaskButton $active aria-label="PVsyst"><Logo w={38} h={48} /></TaskButton>
        </TaskIcons>
        <Tray>
          <UpIcon />
          <Language>ENG</Language>
          <NetworkIcon />
          <SoundIcon />
          <BatteryIcon />
          <Clock>1:28 PM<br />4/4/2025</Clock>
          <BellIcon />
        </Tray>
      </Taskbar>
    </Desktop>
  );
}
